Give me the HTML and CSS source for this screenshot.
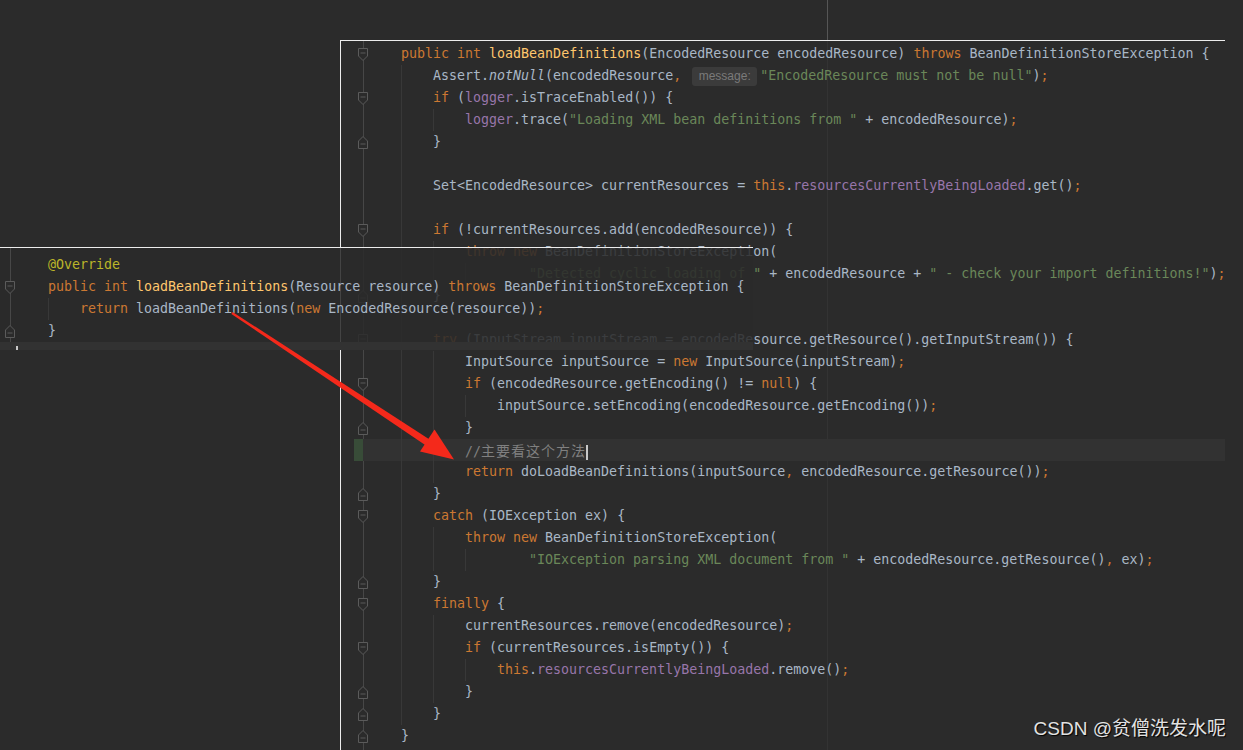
FILE: index.html
```html
<!DOCTYPE html>
<html lang="en">
  <head>
    <meta charset="UTF-8" />
    <meta name="viewport" content="width=device-width, initial-scale=1.0" />
    <title>loadBeanDefinitions</title>
    <link rel="stylesheet" href="styles.css">
  </head>
  <body>
    <div class="top-strip"></div>

    <div class="editor main">
      <div class="ln"><span class="gut"><svg class="fold" viewBox="0 0 10 13"><path d="M0.5 0.5h9v7.5l-4.5 4.5l-4.5-4.5z"/><path d="M2.5 5h5"/></svg></span><span class="kw">public int</span> <span class="fn">loadBeanDefinitions</span>(EncodedResource encodedResource) <span class="kw">throws</span> BeanDefinitionStoreException {</div>
      <div class="ln"><span class="gut"></span><span class="g"></span>Assert.<span class="it">notNull</span>(encodedResource<span class="kw">,</span> <span class="hint">message:</span><span class="st">"EncodedResource must not be null"</span>)<span class="kw">;</span></div>
      <div class="ln"><span class="gut"><svg class="fold" viewBox="0 0 10 13"><path d="M0.5 0.5h9v7.5l-4.5 4.5l-4.5-4.5z"/><path d="M2.5 5h5"/></svg></span><span class="g"></span><span class="kw">if</span> (<span class="fd">logger</span>.isTraceEnabled()) {</div>
      <div class="ln"><span class="gut"></span><span class="g"></span><span class="g"></span><span class="fd">logger</span>.trace(<span class="st">"Loading XML bean definitions from "</span> + encodedResource)<span class="kw">;</span></div>
      <div class="ln"><span class="gut"><svg class="fold" viewBox="0 0 10 13"><path d="M0.5 12.5h9v-7.5l-4.5-4.5l-4.5 4.5z"/><path d="M2.5 8h5"/></svg></span><span class="g"></span>}</div>
      <div class="ln"><span class="gut"></span><span class="g"></span></div>
      <div class="ln"><span class="gut"></span><span class="g"></span>Set&lt;EncodedResource&gt; currentResources = <span class="kw">this</span>.<span class="fd">resourcesCurrentlyBeingLoaded</span>.get()<span class="kw">;</span></div>
      <div class="ln"><span class="gut"></span><span class="g"></span></div>
      <div class="ln"><span class="gut"><svg class="fold" viewBox="0 0 10 13"><path d="M0.5 0.5h9v7.5l-4.5 4.5l-4.5-4.5z"/><path d="M2.5 5h5"/></svg></span><span class="g"></span><span class="kw">if</span> (!currentResources.add(encodedResource)) {</div>
      <div class="ln"><span class="gut"></span><span class="g"></span><span class="g"></span><span class="kw">throw new</span> BeanDefinitionStoreException(</div>
      <div class="ln"><span class="gut"></span><span class="g"></span><span class="g"></span><span class="g"></span>    <span class="st">"Detected cyclic loading of "</span> + encodedResource + <span class="st">" - check your import definitions!"</span>)<span class="kw">;</span></div>
      <div class="ln"><span class="gut"><svg class="fold" viewBox="0 0 10 13"><path d="M0.5 12.5h9v-7.5l-4.5-4.5l-4.5 4.5z"/><path d="M2.5 8h5"/></svg></span><span class="g"></span>}</div>
      <div class="ln"><span class="gut"></span><span class="g"></span></div>
      <div class="ln"><span class="gut"><svg class="fold" viewBox="0 0 10 13"><path d="M0.5 0.5h9v7.5l-4.5 4.5l-4.5-4.5z"/><path d="M2.5 5h5"/></svg></span><span class="g"></span><span class="kw">try</span> (InputStream inputStream = encodedResource.getResource().getInputStream()) {</div>
      <div class="ln"><span class="gut"></span><span class="g"></span><span class="g"></span>InputSource inputSource = <span class="kw">new</span> InputSource(inputStream)<span class="kw">;</span></div>
      <div class="ln"><span class="gut"><svg class="fold" viewBox="0 0 10 13"><path d="M0.5 0.5h9v7.5l-4.5 4.5l-4.5-4.5z"/><path d="M2.5 5h5"/></svg></span><span class="g"></span><span class="g"></span><span class="kw">if</span> (encodedResource.getEncoding() != <span class="kw">null</span>) {</div>
      <div class="ln"><span class="gut"></span><span class="g"></span><span class="g"></span><span class="g"></span>inputSource.setEncoding(encodedResource.getEncoding())<span class="kw">;</span></div>
      <div class="ln"><span class="gut"><svg class="fold" viewBox="0 0 10 13"><path d="M0.5 12.5h9v-7.5l-4.5-4.5l-4.5 4.5z"/><path d="M2.5 8h5"/></svg></span><span class="g"></span><span class="g"></span>}</div>
      <div class="ln cur"><span class="gut"><span class="vcs"></span></span><span class="g"></span><span class="g"></span><span class="cm">//<span class="cjk">主要看这个方法</span></span><span class="caret"></span></div>
      <div class="ln"><span class="gut"></span><span class="g"></span><span class="g"></span><span class="kw">return</span> doLoadBeanDefinitions(inputSource<span class="kw">,</span> encodedResource.getResource())<span class="kw">;</span></div>
      <div class="ln"><span class="gut"><svg class="fold" viewBox="0 0 10 13"><path d="M0.5 12.5h9v-7.5l-4.5-4.5l-4.5 4.5z"/><path d="M2.5 8h5"/></svg></span><span class="g"></span>}</div>
      <div class="ln"><span class="gut"><svg class="fold" viewBox="0 0 10 13"><path d="M0.5 0.5h9v7.5l-4.5 4.5l-4.5-4.5z"/><path d="M2.5 5h5"/></svg></span><span class="g"></span><span class="kw">catch</span> (IOException ex) {</div>
      <div class="ln"><span class="gut"></span><span class="g"></span><span class="g"></span><span class="kw">throw new</span> BeanDefinitionStoreException(</div>
      <div class="ln"><span class="gut"></span><span class="g"></span><span class="g"></span><span class="g"></span>    <span class="st">"IOException parsing XML document from "</span> + encodedResource.getResource()<span class="kw">,</span> ex)<span class="kw">;</span></div>
      <div class="ln"><span class="gut"><svg class="fold" viewBox="0 0 10 13"><path d="M0.5 12.5h9v-7.5l-4.5-4.5l-4.5 4.5z"/><path d="M2.5 8h5"/></svg></span><span class="g"></span>}</div>
      <div class="ln"><span class="gut"><svg class="fold" viewBox="0 0 10 13"><path d="M0.5 0.5h9v7.5l-4.5 4.5l-4.5-4.5z"/><path d="M2.5 5h5"/></svg></span><span class="g"></span><span class="kw">finally</span> {</div>
      <div class="ln"><span class="gut"></span><span class="g"></span><span class="g"></span>currentResources.remove(encodedResource)<span class="kw">;</span></div>
      <div class="ln"><span class="gut"><svg class="fold" viewBox="0 0 10 13"><path d="M0.5 0.5h9v7.5l-4.5 4.5l-4.5-4.5z"/><path d="M2.5 5h5"/></svg></span><span class="g"></span><span class="g"></span><span class="kw">if</span> (currentResources.isEmpty()) {</div>
      <div class="ln"><span class="gut"></span><span class="g"></span><span class="g"></span><span class="g"></span><span class="kw">this</span>.<span class="fd">resourcesCurrentlyBeingLoaded</span>.remove()<span class="kw">;</span></div>
      <div class="ln"><span class="gut"><svg class="fold" viewBox="0 0 10 13"><path d="M0.5 12.5h9v-7.5l-4.5-4.5l-4.5 4.5z"/><path d="M2.5 8h5"/></svg></span><span class="g"></span><span class="g"></span>}</div>
      <div class="ln"><span class="gut"><svg class="fold" viewBox="0 0 10 13"><path d="M0.5 12.5h9v-7.5l-4.5-4.5l-4.5 4.5z"/><path d="M2.5 8h5"/></svg></span><span class="g"></span>}</div>
      <div class="ln"><span class="gut"><svg class="fold" viewBox="0 0 10 13"><path d="M0.5 12.5h9v-7.5l-4.5-4.5l-4.5 4.5z"/><path d="M2.5 8h5"/></svg></span>}</div>
    </div>

    <!-- pasted snippet lying over the main editor -->
    <div class="editor snippet">
      <div class="ln"><span class="gut"></span><span class="an">@Override</span></div>
      <div class="ln"><span class="gut"><svg class="fold" viewBox="0 0 10 13"><path d="M0.5 0.5h9v7.5l-4.5 4.5l-4.5-4.5z"/><path d="M2.5 5h5"/></svg></span><span class="kw">public int</span> <span class="fn">loadBeanDefinitions</span>(Resource resource) <span class="kw">throws</span> BeanDefinitionStoreException {</div>
      <div class="ln"><span class="gut"></span><span class="g"></span><span class="kw">return</span> loadBeanDefinitions(<span class="kw">new</span> EncodedResource(resource))<span class="kw">;</span></div>
      <div class="ln"><span class="gut"><svg class="fold" viewBox="0 0 10 13"><path d="M0.5 12.5h9v-7.5l-4.5-4.5l-4.5 4.5z"/><path d="M2.5 8h5"/></svg></span>}</div>
      <div class="ln cur"><span class="caret"></span></div>
    </div>

    <svg class="arrow" viewBox="0 0 1243 750">
      <polygon points="231.4,314 232.6,312 431.9,441.1 428.1,446.9" />
      <polygon points="454,459.5 420,451.5 434.5,429.5" />
    </svg>

    <div class="watermark">CSDN @贫僧洗发水呢</div>
  </body>
</html>
```
FILE: styles.css
```css
body {
  margin: 0;
  width: 1243px;
  height: 750px;
  overflow: hidden;
  position: relative;
  background-color: #2b2b2b;
  color: #a9b7c6;
  font-family: "DejaVu Sans Mono", "Liberation Mono", monospace;
  font-size: 13.3px;
}
.top-strip {
  height: 40px;
  margin-left: 827px;
  width: 0;
  border-left: 1px solid #565656;
}
.editor .ln {
  height: 22px;
  line-height: 22px;
  white-space: pre;
  overflow: hidden;
}
.gut {
  display: inline-flex;
  align-items: center;
  vertical-align: top;
  height: 22px;
  box-sizing: border-box;
}
.fold {
  width: 10px;
  height: 13px;
  fill: #2b2b2b;
  stroke: #5b5b5b;
  stroke-width: 1;
}
.g {
  display: inline-block;
  vertical-align: top;
  width: 32px;
  height: 22px;
  box-shadow: inset 1px 0 #383838;
}

/* main editor */
.main {
  margin-left: 340px;
  width: 884px;
  height: 707px;
  padding-top: 2px;
  border-top: 1px solid #ececec;
  border-left: 1px solid #ececec;
  background-image:
    linear-gradient(to right, transparent 22px, #474747 22px, #474747 23px, transparent 23px),
    linear-gradient(to right, transparent 486px, #333333 486px, #333333 487px, transparent 487px);
  overflow: hidden;
}
.main .gut {
  width: 60px;
  padding-left: 17px;
}
.main .ln.cur {
  background: linear-gradient(to right, transparent 13px, #323232 13px);
}
.vcs {
  width: 9px;
  height: 22px;
  margin-left: -4px;
  background-color: #384c38;
}

/* snippet */
.snippet {
  position: absolute;
  left: 0;
  top: 247px;
  width: 753px;
  height: 103px;
  box-sizing: border-box;
  padding-top: 6px;
  border-top: 1px solid #ececec;
  background-color: rgba(43, 43, 43, 0.87);
  background-image: linear-gradient(to right, transparent 10px, #474747 10px, #474747 11px, transparent 11px);
  overflow: hidden;
}
.snippet .gut {
  width: 48px;
  padding-left: 5px;
}
.snippet .ln.cur {
  background-color: #323232;
  padding-left: 16px;
}

/* syntax */
.kw { color: #cc7832; }
.fn { color: #ffc66d; }
.st { color: #6a8759; }
.fd { color: #9876aa; }
.an { color: #bbb529; }
.cm { color: #808080; }
.it { font-style: italic; }
.cjk {
  font-family: "Noto Sans CJK SC", sans-serif;
  font-size: 14px;
  letter-spacing: 1px;
}
.hint {
  display: inline-block;
  width: 65px;
  height: 19px;
  line-height: 19px;
  margin: 0 3px;
  vertical-align: middle;
  border-radius: 3px;
  background-color: #3b3b3b;
  color: #7a7a7a;
  font-family: "Liberation Sans", sans-serif;
  font-size: 12px;
  text-align: center;
}
.caret {
  display: inline-block;
  width: 2px;
  height: 15px;
  vertical-align: middle;
  background-color: #c8c8c8;
}

.arrow {
  position: absolute;
  left: 0;
  top: 0;
  width: 1243px;
  height: 750px;
  fill: #f4291b;
}
.watermark {
  position: absolute;
  right: 17px;
  bottom: 10px;
  line-height: 22px;
  font-family: "Liberation Sans", "Noto Sans CJK SC", sans-serif;
  font-size: 19px;
  color: #e2e2e2;
  text-shadow: 1px 1px 1px #000;
}
```
